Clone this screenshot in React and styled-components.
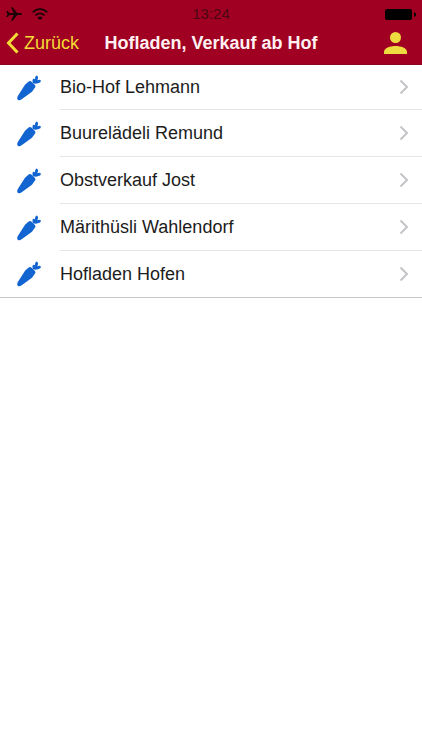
import styled, { createGlobalStyle } from 'styled-components';

const GlobalStyle = createGlobalStyle`
	* {
		box-sizing: border-box;
	}

	body {
		margin: 0;
		background: #fff;
		font-family: 'Liberation Sans', Arial, sans-serif;
		color: #1c1c1c;
	}
`;

const farmShops = [
	'Bio-Hof Lehmann',
	'Buurelädeli Remund',
	'Obstverkauf Jost',
	'Märithüsli Wahlendorf',
	'Hofladen Hofen',
];

const Header = styled.header`
	background: #a00021;
	border-bottom: 1px solid #8d0720;
`;

const StatusBar = styled.div`
	display: grid;
	grid-template-columns: 1fr auto 1fr;
	align-items: center;
	height: 26px;
	padding: 2px 6px 0;
	color: #1d0408;
`;

const StatusIcons = styled.div`
	display: flex;
	align-items: center;
	gap: 10px;
	justify-content: ${({ $end }) => ($end ? 'flex-end' : 'flex-start')};
`;

const Clock = styled.time`
	font-size: 15px;
	line-height: 20px;
	color: #4a0713;
`;

const NavBar = styled.nav`
	display: grid;
	grid-template-columns: 1fr auto 1fr;
	align-items: center;
	height: 38px;
	padding: 0 6px 4px;
`;

const NavButton = styled.button`
	display: flex;
	align-items: center;
	gap: 5px;
	justify-self: ${({ $end }) => ($end ? 'end' : 'start')};
	padding: ${({ $end }) => ($end ? '0 9px' : '0')};
	border: 0;
	background: none;
	color: #f3dc35;
	font: inherit;
	font-size: 18px;
	line-height: 24px;
	cursor: pointer;
`;

const Title = styled.h1`
	margin: 0;
	color: #fff0f2;
	font-size: 18px;
	line-height: 24px;
	white-space: nowrap;
`;

const ShopList = styled.ul`
	margin: 0;
	padding: 0;
	list-style: none;
	border-bottom: 1px solid #c8c8c8;
`;

const ShopLink = styled.a`
	display: flex;
	align-items: center;
	gap: 18px;
	height: 47px;
	padding-left: 17px;
	color: inherit;
	text-decoration: none;

	li:first-child > & {
		height: 45px;
	}

	li:last-child > & {
		height: 46px;
	}
`;

const ShopLabel = styled.span`
	display: flex;
	flex: 1;
	align-items: center;
	justify-content: space-between;
	height: 100%;
	padding-right: 13px;
	border-bottom: 1px solid #e6e6e6;
	font-size: 18px;

	li:last-child & {
		border-bottom: 0;
	}
`;

const PlaneIcon = () => (
	<svg width="16" height="14" viewBox="0 0 48 42" fill="currentColor" aria-hidden="true">
		<path d="M1 12h4l6 6h12L15 1h5l14 17h8c4 0 6 1 6 3s-2 3-6 3h-8L20 41h-5l8-17H11l-6 6H1l3-9z" />
	</svg>
);

const WifiIcon = () => (
	<svg width="16" height="13" viewBox="0 0 48 39" fill="none" stroke="currentColor" strokeWidth="5" aria-hidden="true">
		<path d="M2 13c13-13 31-13 44 0M10 22c9-8 19-8 28 0" />
		<path d="M16 29c5-5 11-5 16 0l-8 8z" fill="currentColor" stroke="none" />
	</svg>
);

const BatteryIcon = () => (
	<svg width="31" height="11" viewBox="0 0 31 11" fill="#000" aria-hidden="true">
		<rect width="27" height="11" rx="2" />
		<path d="M29 3c3 1 3 4 0 5z" />
	</svg>
);

const BackIcon = () => (
	<svg width="13" height="22" viewBox="0 0 13 22" fill="none" stroke="currentColor" strokeWidth="3" aria-hidden="true">
		<path d="M11.5 1.5L2.5 11l9 9.5" />
	</svg>
);

const PersonIcon = () => (
	<svg width="23" height="22" viewBox="0 0 23 22" fill="#eedb40" aria-hidden="true">
		<circle cx="11.5" cy="5.5" r="5.5" />
		<path d="M0 22v-2c0-4 6-6 11.500-6S23 16 23 20v2z" />
	</svg>
);

const CarrotIcon = () => (
	<svg width="25" height="26" viewBox="0 0 75 78" fill="#1265d0" aria-hidden="true">
		<path d="M24 29L34 20c3-3 7-3 10 0l9 9c3 3 3 7 0 10l-8 11L15 72c-5 4-9 5-12 3s-3-6-1-11z" />
		<path d="M48 25c-2-5-2-10 0-13 2-2 4-1 6 1 0-5 1-10 4-11s6 4 5 8l-2 6c4-2 9-3 10 0 2 4-2 8-8 9-5 2-10 2-15 0z" />
	</svg>
);

const ChevronIcon = () => (
	<svg width="10" height="16" viewBox="0 0 10 16" fill="none" stroke="#c4c4c8" strokeWidth="2" aria-hidden="true">
		<path d="M1.500 1.500L8 8l-6.500 6.500" />
	</svg>
);

const App = () => {
	return (
		<>
			<GlobalStyle />
			<Header>
				<StatusBar>
					<StatusIcons>
						<PlaneIcon />
						<WifiIcon />
					</StatusIcons>
					<Clock>13:24</Clock>
					<StatusIcons $end>
						<BatteryIcon />
					</StatusIcons>
				</StatusBar>
				<NavBar>
					<NavButton type="button">
						<BackIcon />
						Zurück
					</NavButton>
					<Title>Hofladen, Verkauf ab Hof</Title>
					<NavButton type="button" $end aria-label="Profil">
						<PersonIcon />
					</NavButton>
				</NavBar>
			</Header>
			<main>
				<ShopList>
					{farmShops.map((name) => (
						<li key={name}>
							<ShopLink href="#">
								<CarrotIcon />
								<ShopLabel>
									{name}
									<ChevronIcon />
								</ShopLabel>
							</ShopLink>
						</li>
					))}
				</ShopList>
			</main>
		</>
	);
};

export default App;
